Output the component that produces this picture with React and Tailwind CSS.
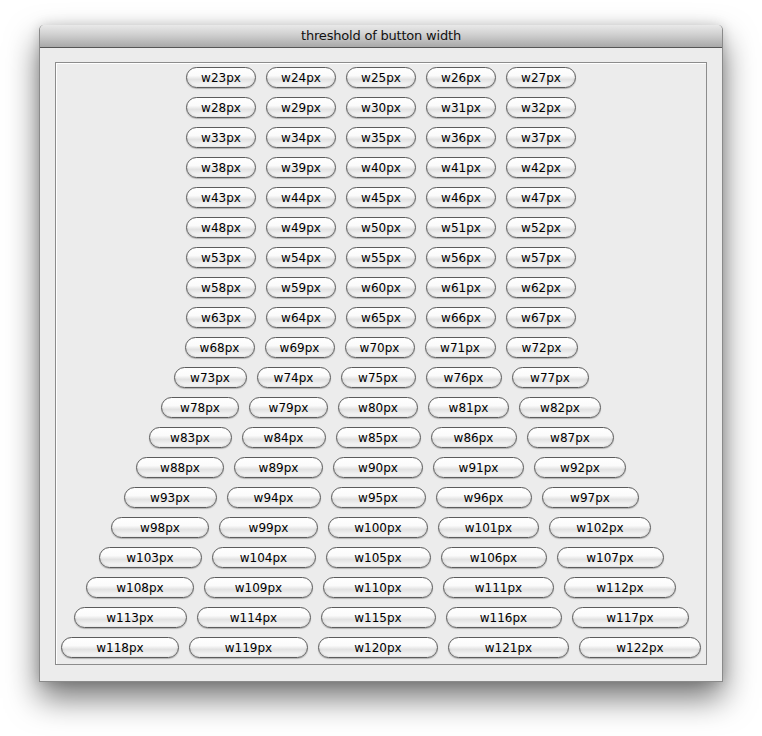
import React from 'react';

const rows = Array.from({ length: 20 }, (_, r) =>
  Array.from({ length: 5 }, (_, c) => 23 + r * 5 + c)
);

const PillButton = ({ n }) => (
  <button
    className="h-[21px] shrink-0 rounded-full border border-[#5c5c5c] bg-[linear-gradient(to_bottom,#ffffff_0%,#fbfbfb_40%,#e2e2e2_60%,#f2f2f2_85%,#ffffff_100%)] shadow-[0_1px_1px_rgba(0,0,0,0.25),inset_0_-1px_2px_rgba(0,0,0,0.12)] text-[12px] leading-none text-black font-['DejaVu_Sans',sans-serif] flex items-center justify-center"
    style={{ width: Math.max(n, 70) }}
  >
    w{n}px
  </button>
);

export default function App() {
  return (
    <div className="w-[762px] h-[736px] bg-white pt-[25px] pl-[39px] overflow-hidden">
      <div className="w-[684px] h-[657px] rounded-t-[5px] border border-t-0 border-[#8a8a8a] bg-[#ececec] shadow-[0_16px_32px_rgba(0,0,0,0.55),0_0_12px_rgba(0,0,0,0.15)] flex flex-col">
        {/* title bar */}
        <div className="h-[23px] shrink-0 rounded-t-[5px] border-b border-[#565656] bg-[linear-gradient(to_bottom,#e9e9e9,#cfcfcf_45%,#a9a9a9)] flex items-center justify-center">
          <span className="text-[13px] text-[#111] font-['DejaVu_Sans',sans-serif] tracking-[-0.2px]">threshold of button width</span>
        </div>

        <div className="flex-1 pt-[14px] pb-[16px] px-[15px]">
          <div className="h-full border border-[#8c8c8c] shadow-[inset_1px_1px_0_#ffffff] bg-[#ececec] pt-[4px] flex flex-col gap-[9px]">
            {rows.map((row, i) => (
              <div key={i} className="flex justify-center gap-[10px]">
                {row.map(n => (
                  <PillButton key={n} n={n} />
                ))}
              </div>
            ))}
          </div>
        </div>
      </div>
    </div>
  );
}
